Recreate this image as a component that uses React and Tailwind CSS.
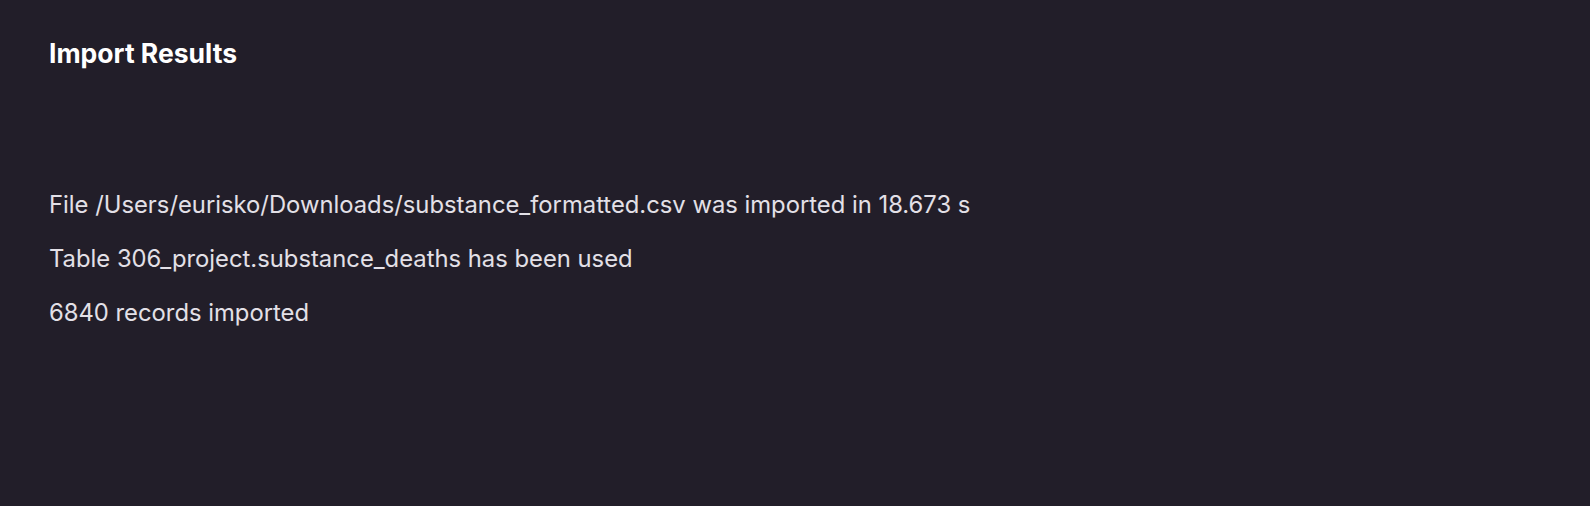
export default function App() {
  return (
    <div
      className="w-[1590px] h-[506px] bg-[#221e29] text-[#e3e0e7] pl-[49px] pt-[37px] overflow-hidden"
      style={{ fontFamily: "Inter, 'Open Sans', sans-serif" }}
    >
      <h1 className="text-[26.5px] leading-[32px] font-bold text-white">Import Results</h1>
      <div className="mt-[124px] flex flex-col gap-[30px] text-[23.8px] leading-[24px]">
        <p>File /Users/eurisko/Downloads/substance_formatted.csv was imported in 18.673 s</p>
        <p>Table 306_project.substance_deaths has been used</p>
        <p>6840 records imported</p>
      </div>
    </div>
  );
}
